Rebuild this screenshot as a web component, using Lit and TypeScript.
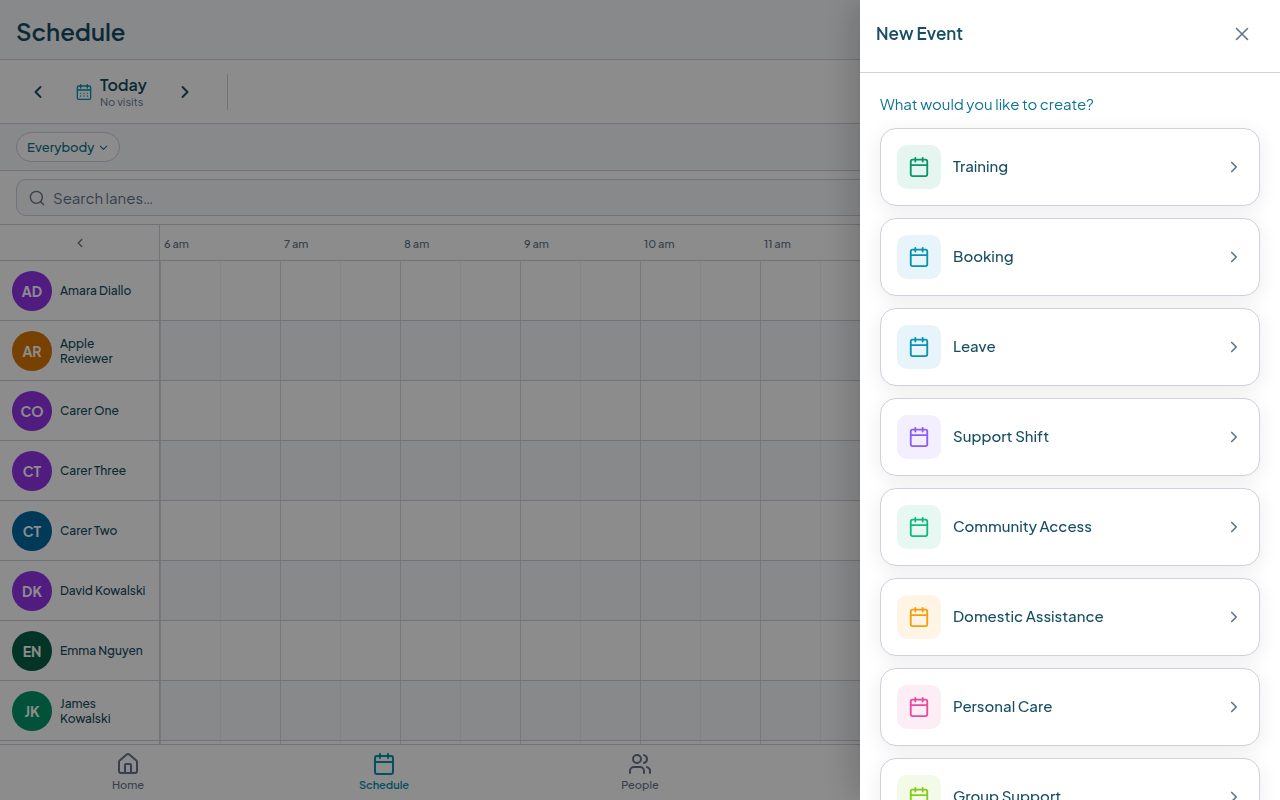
import { LitElement, html, css, svg, nothing } from "lit";
import { customElement, property, state } from "lit/decorators.js";
import { styleMap } from "lit/directives/style-map.js";

const icons = {
  calendar: svg`<path d="M8 2v4M16 2v4M3 10h18"/><rect x="3" y="4" width="18" height="18" rx="2"/>`,
  calendarDays: svg`<path d="M7 1v5M17 1v5M2 9h20"/><rect x="2" y="3" width="20" height="20" rx="2.5"/><path d="M7 14h.01M12 14h.01M17 14h.01M7 18h.01M12 18h.01M17 18h.01"/>`,
  left: svg`<path d="m15 18-6-6 6-6"/>`,
  right: svg`<path d="m9 18 6-6-6-6"/>`,
  down: svg`<path d="m5 9 7 7 7-7"/>`,
  close: svg`<path d="M18 6 6 18M6 6l12 12"/>`,
  search: svg`<circle cx="11" cy="11" r="9"/><path d="m22 22-4.5-4.5"/>`,
  home: svg`<path d="M15 21v-8a1 1 0 0 0-1-1h-4a1 1 0 0 0-1 1v8"/><path d="M3 10a2 2 0 0 1 .709-1.528l7-6a2 2 0 0 1 2.582 0l7 6A2 2 0 0 1 21 10v9a2 2 0 0 1-2 2H5a2 2 0 0 1-2-2z"/>`,
  people: svg`<path d="M16 21v-2a4 4 0 0 0-4-4H6a4 4 0 0 0-4 4v2"/><circle cx="9" cy="7" r="4"/><path d="M22 21v-2a4 4 0 0 0-3-3.87M16 3.13a4 4 0 0 1 0 7.75"/>`,
};

type IconName = keyof typeof icons;

const icon = (name: IconName, size: number, weight = 2) => html`
  <svg width=${size} height=${size} viewBox="0 0 24 24" fill="none" stroke="currentColor"
    stroke-width=${weight} stroke-linecap="round" stroke-linejoin="round" aria-hidden="true">${icons[name]}</svg>`;

const sharedStyles = css`
  * { box-sizing: border-box; }
  svg { display: block; flex: none; }
  button {
    font: inherit;
    color: inherit;
    background: none;
    border: 0;
    padding: 0;
    margin: 0;
    cursor: pointer;
  }
`;

interface EventType { label: string; color: string; tint: string; }

const eventTypes: EventType[] = [
  { label: "Training", color: "#059669", tint: "#e6f5f0" },
  { label: "Booking", color: "#0891b2", tint: "#e7f4f9" },
  { label: "Leave", color: "#0891b2", tint: "#e7f4f9" },
  { label: "Support Shift", color: "#8b5cf6", tint: "#f3effe" },
  { label: "Community Access", color: "#10b981", tint: "#e7f8f2" },
  { label: "Domestic Assistance", color: "#f59e0b", tint: "#fef5e7" },
  { label: "Personal Care", color: "#ec4899", tint: "#fdedf5" },
  { label: "Group Support", color: "#84cc16", tint: "#f3fae8" },
];

const lanes = [
  { name: "Amara Diallo", initials: "AD", color: "#9333ea" },
  { name: "Apple Reviewer", initials: "AR", color: "#d97706" },
  { name: "Carer One", initials: "CO", color: "#9333ea" },
  { name: "Carer Three", initials: "CT", color: "#9333ea" },
  { name: "Carer Two", initials: "CT", color: "#0369a1" },
  { name: "David Kowalski", initials: "DK", color: "#9333ea" },
  { name: "Emma Nguyen", initials: "EN", color: "#065f46" },
  { name: "James Kowalski", initials: "JK", color: "#059669" },
];

const hours = ["6 am", "7 am", "8 am", "9 am", "10 am", "11 am"];

@customElement("event-drawer")
export class EventDrawer extends LitElement {
  static styles = [sharedStyles, css`
    :host {
      display: flex;
      flex-direction: column;
      background: #fff;
      color: #164e63;
      box-shadow: -8px 0 32px rgba(0, 0, 0, 0.18);
    }
    .head {
      display: flex;
      align-items: flex-start;
      justify-content: space-between;
      padding: 12px 16px 16px;
      border-bottom: 1px solid #d0d0de;
    }
    .title { margin: 0; font-size: 17px; line-height: 42px; font-weight: 600; }
    .close { display: grid; place-items: center; width: 44px; height: 44px; color: #64748b; }
    .body { flex: 1; min-height: 0; overflow-y: auto; scrollbar-width: none; padding: 20px; }
    .question { margin: 0 0 14px; font-size: 15px; line-height: 21px; color: #0e7490; }
    .list { display: flex; flex-direction: column; gap: 12px; margin: 0; padding: 0; list-style: none; }
    .card {
      display: flex;
      align-items: center;
      gap: 12px;
      width: 100%;
      padding: 16px;
      background: #fff;
      border: 1px solid #d0d0de;
      border-radius: 16px;
      box-shadow: 0 4px 20px rgba(0, 0, 0, 0.08);
      text-align: left;
    }
    .tile { display: grid; place-items: center; width: 44px; height: 44px; border-radius: 10px; }
    .name { flex: 1; padding-bottom: 2px; font-size: 15px; line-height: 20px; font-weight: 500; }
    .go { color: #64748b; }
  `];

  private close() {
    this.dispatchEvent(new CustomEvent("close"));
  }

  render() {
    return html`
      <header class="head">
        <h2 class="title">New Event</h2>
        <button class="close" aria-label="Close" @click=${this.close}>${icon("close", 22, 1.75)}</button>
      </header>
      <div class="body">
        <p class="question">What would you like to create?</p>
        <ul class="list">
          ${eventTypes.map((type) => html`
            <li>
              <button class="card">
                <span class="tile" style=${styleMap({ color: type.color, background: type.tint })}>${icon("calendar", 22)}</span>
                <span class="name">${type.label}</span>
                <span class="go">${icon("right", 18, 2.25)}</span>
              </button>
            </li>`)}
        </ul>
      </div>`;
  }
}

@customElement("schedule-lane")
export class ScheduleLane extends LitElement {
  static styles = [sharedStyles, css`
    :host {
      display: flex;
      flex: none;
      height: 60px;
      border-bottom: 1px solid #cfcfdb;
      background: #fff;
    }
    .person {
      display: flex;
      align-items: center;
      gap: 8px;
      width: 160px;
      flex: none;
      padding: 0 12px;
      border-right: 1px solid #cfcfdb;
    }
    .avatar {
      display: grid;
      place-items: center;
      flex: none;
      width: 40px;
      height: 40px;
      border-radius: 50%;
      color: #fff;
      font-size: 14px;
      line-height: 20px;
      font-weight: 700;
    }
    .name { font-size: 12px; line-height: 15px; font-weight: 500; }
    .track {
      flex: 1;
      background-image:
        linear-gradient(to right, #d9dde3 1px, transparent 1px),
        linear-gradient(to right, transparent 60px, #f1f3f5 60px, #f1f3f5 61px, transparent 61px);
      background-size: 120px 100%;
    }
    .shaded {
      background-color: #f8fafc;
      background-image:
        linear-gradient(to right, #d9dde3 1px, transparent 1px),
        linear-gradient(to right, transparent 60px, #eceff3 60px, #eceff3 61px, transparent 61px);
    }
  `];

  @property() name = "";
  @property() initials = "";
  @property() color = "";
  @property({ type: Boolean }) shaded = false;

  render() {
    return html`
      <div class="person">
        ${this.initials
          ? html`<span class="avatar" style=${styleMap({ background: this.color })}>${this.initials}</span>
              <span class="name">${this.name}</span>`
          : nothing}
      </div>
      <div class="track ${this.shaded ? "shaded" : ""}"></div>`;
  }
}

@customElement("app-root")
export class AppRoot extends LitElement {
  static styles = [sharedStyles, css`
    :host {
      display: block;
      height: 100vh;
      overflow: hidden;
      font-family: "Plus Jakarta Sans", Inter, "Open Sans", sans-serif;
      color: #164e63;
      background: #fff;
    }
    .page { display: flex; flex-direction: column; height: 100%; }
    .top { padding: 16px 16px 13px; background: #f8fafc; border-bottom: 1px solid #cfcfdb; }
    .heading { margin: 0; font-size: 24px; line-height: 30px; font-weight: 600; }
    .dates {
      display: flex;
      align-items: center;
      padding: 14px 16px 13px;
      border-bottom: 1px solid #cfcfdb;
    }
    .step { display: grid; place-items: center; width: 44px; height: 36px; }
    .day { display: flex; align-items: center; gap: 8px; padding: 0 16px; text-align: left; }
    .day-icon { color: #0891b2; }
    .today { display: block; font-size: 16px; line-height: 20px; font-weight: 600; }
    .visits { display: block; font-size: 11px; line-height: 14px; color: #64748b; }
    .rule { width: 1px; height: 36px; margin-left: 20px; background: #cfcfdb; }
    .filters { padding: 8px 16px; background: #f8fafc; border-bottom: 1px solid #cfcfdb; }
    .chip {
      display: inline-flex;
      align-items: center;
      gap: 4px;
      height: 30px;
      padding: 0 10px;
      border: 1px solid #cfcfdb;
      border-radius: 15px;
      background: #fff;
      color: #0e7490;
      font-size: 13px;
      font-weight: 500;
    }
    .searchbar { padding: 8px 16px; border-bottom: 1px solid #cfcfdb; }
    .search {
      display: flex;
      align-items: center;
      gap: 8px;
      height: 37px;
      padding: 0 12px;
      border: 1px solid #cfcfdb;
      border-radius: 10px;
      background: #f8fafc;
      color: #64748b;
    }
    .field {
      flex: 1;
      min-width: 0;
      border: 0;
      padding: 0;
      outline: 0;
      background: none;
      font: inherit;
      font-size: 15px;
      color: #164e63;
    }
    .field::placeholder { color: #64748b; opacity: 1; }
    .hours { display: flex; flex: none; height: 36px; border-bottom: 1px solid #cfcfdb; color: #64748b; }
    .collapse { display: grid; place-items: center; width: 160px; flex: none; border-right: 1px solid #cfcfdb; }
    .hour { width: 120px; flex: none; padding: 0 4px; font-size: 11px; line-height: 37px; font-weight: 500; }
    .lanes { display: flex; flex-direction: column; flex: 1; min-height: 0; overflow: hidden; }
    .tabs {
      display: grid;
      grid-template-columns: repeat(5, 1fr);
      flex: none;
      height: 56px;
      border-top: 1px solid #cfcfdb;
      background: #fff;
    }
    .tab {
      display: flex;
      flex-direction: column;
      align-items: center;
      gap: 2px;
      padding-top: 7px;
      color: #64748b;
      font-size: 11px;
      line-height: 14px;
      font-weight: 500;
      text-decoration: none;
    }
    .current { color: #0891b2; font-weight: 600; }
    .scrim { position: fixed; inset: 0; background: rgba(0, 0, 0, 0.45); }
    .drawer { position: fixed; top: 0; right: 0; bottom: 0; width: 420px; max-width: 100%; }
  `];

  @state() private drawerOpen = true;

  render() {
    return html`
      <div class="page">
        <header class="top"><h1 class="heading">Schedule</h1></header>
        <div class="dates">
          <button class="step" aria-label="Previous day">${icon("left", 20, 2.25)}</button>
          <button class="day">
            <span class="day-icon">${icon("calendarDays", 16)}</span>
            <span><span class="today">Today</span><span class="visits">No visits</span></span>
          </button>
          <button class="step" aria-label="Next day">${icon("right", 20, 2.25)}</button>
          <span class="rule"></span>
        </div>
        <div class="filters">
          <button class="chip">Everybody ${icon("down", 11, 2.25)}</button>
        </div>
        <div class="searchbar">
          <label class="search">
            ${icon("search", 16)}
            <input class="field" type="text" aria-label="Search lanes" placeholder="Search lanes…" />
          </label>
        </div>
        <div class="hours">
          <button class="collapse" aria-label="Collapse lanes">${icon("left", 14, 2.25)}</button>
          ${hours.map((hour) => html`<span class="hour">${hour}</span>`)}
        </div>
        <main class="lanes">
          ${lanes.map((lane, i) => html`
            <schedule-lane .name=${lane.name} .initials=${lane.initials} .color=${lane.color}
              .shaded=${i % 2 === 1}></schedule-lane>`)}
          <schedule-lane></schedule-lane>
        </main>
        <nav class="tabs">
          <a class="tab" href="#home">${icon("home", 24)}Home</a>
          <a class="tab current" href="#schedule" aria-current="page">${icon("calendar", 24)}Schedule</a>
          <a class="tab" href="#people">${icon("people", 24)}People</a>
        </nav>
      </div>
      ${this.drawerOpen
        ? html`
            <div class="scrim" @click=${() => (this.drawerOpen = false)}></div>
            <event-drawer class="drawer" role="dialog" aria-label="New Event"
              @close=${() => (this.drawerOpen = false)}></event-drawer>`
        : nothing}`;
  }
}
